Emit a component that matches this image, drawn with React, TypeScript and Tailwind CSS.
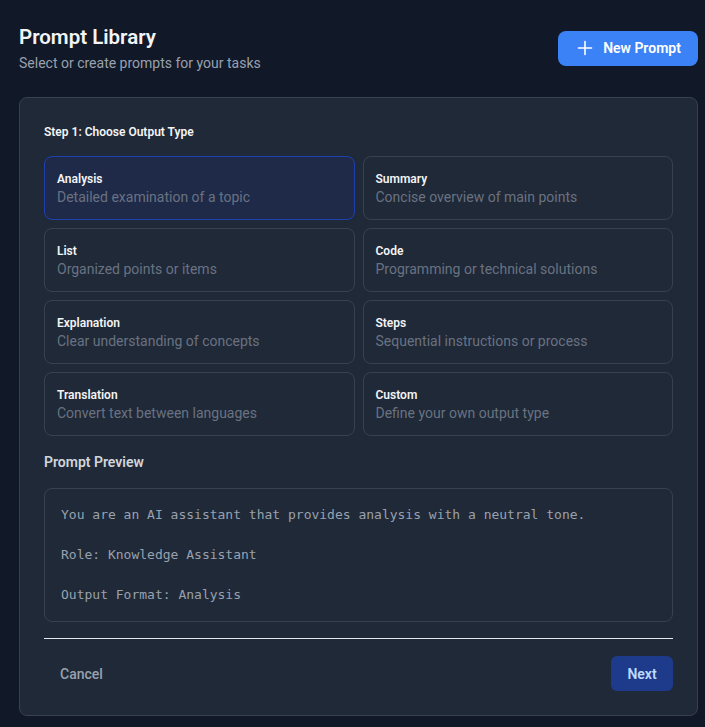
import React from "react";

const types = [
  { t: "Analysis", d: "Detailed examination of a topic" },
  { t: "Summary", d: "Concise overview of main points" },
  { t: "List", d: "Organized points or items" },
  { t: "Code", d: "Programming or technical solutions" },
  { t: "Explanation", d: "Clear understanding of concepts" },
  { t: "Steps", d: "Sequential instructions or process" },
  { t: "Translation", d: "Convert text between languages" },
  { t: "Custom", d: "Define your own output type" },
];

export default function App() {
  return (
    <div
      className="min-h-screen bg-[#111827] pl-[19px] pr-[7px] pt-[23px] pb-[11px] text-gray-100"
      style={{ fontFamily: 'Roboto, "Noto Sans", sans-serif' }}
    >
      <div className="flex items-center justify-between mb-6">
        <div>
          <h1 className="text-[20.5px] font-semibold leading-7 text-gray-100">Prompt Library</h1>
          <p className="mt-[2px] text-sm leading-5 text-gray-400">Select or create prompts for your tasks</p>
        </div>
        <button className="flex w-[140px] items-center justify-center gap-2 rounded-lg bg-[#3b82f6] h-[35px] text-sm font-semibold text-white">
          <svg width="20" height="20" viewBox="0 0 20 20" fill="none" stroke="currentColor" strokeWidth="1.6" strokeLinecap="round">
            <path d="M10 3.5v13M3.5 10h13" />
          </svg>
          New Prompt
        </button>
      </div>

      <div className="rounded-lg border border-[#374151] bg-[#1f2937] p-6">
        <h2 className="text-xs font-semibold leading-5 text-gray-100 mb-[14px]">Step 1: Choose Output Type</h2>
        <div className="grid grid-cols-2 gap-2">
          {types.map((x, i) => (
            <div
              key={x.t}
              className={
                i === 0
                  ? "h-16 rounded-lg border border-[#1e40af] bg-[#1e2a48] px-3 py-[13px]"
                  : "h-16 rounded-lg border border-[#374151] px-3 py-[13px]"
              }
            >
              <div className="text-xs font-semibold leading-[18px] text-gray-100">{x.t}</div>
              <div className="text-sm leading-[18px] text-gray-500">{x.d}</div>
            </div>
          ))}
        </div>

        <h3 className="mt-4 mb-4 text-sm font-semibold leading-5 text-gray-300">Prompt Preview</h3>
        <div
          className="rounded-lg border border-[#374151] p-4 text-[13px] leading-5 text-gray-400 whitespace-pre"
          style={{ fontFamily: '"DejaVu Sans Mono", monospace' }}
        >
          {"You are an AI assistant that provides analysis with a neutral tone.\n\nRole: Knowledge Assistant\n\nOutput Format: Analysis"}
        </div>

        <div className="mt-4 border-t border-gray-200 pt-[17px] flex items-center justify-between">
          <button className="px-4 h-[35px] text-sm font-medium text-gray-400">Cancel</button>
          <button className="rounded-md bg-[#1e3a8a] w-[62px] h-[35px] text-sm font-semibold text-blue-200">Next</button>
        </div>
      </div>
    </div>
  );
}
